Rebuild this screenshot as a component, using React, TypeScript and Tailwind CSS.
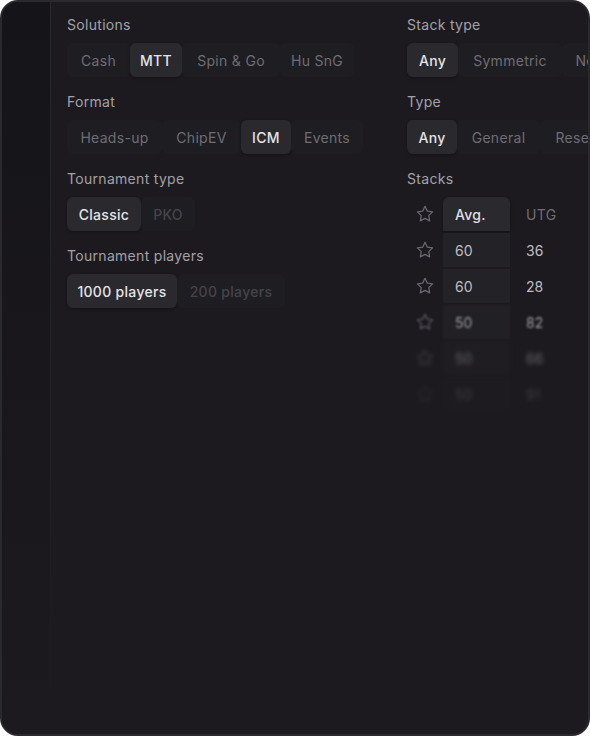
import React from "react";

const font = { fontFamily: "Inter, 'Noto Sans', sans-serif" };

type Item = { t: string; w: string };

function Seg({ items, active, dim = [] as string[] }: { items: Item[]; active: string; dim?: string[] }) {
  return (
    <div className="flex items-stretch h-[34px] mt-[9px]">
      {items.map((it) => {
        const a = it.t === active;
        const d = dim.includes(it.t);
        return (
          <div
            key={it.t}
            className={
              "flex items-center justify-center shrink-0 text-[14px] tracking-[0.3px] whitespace-nowrap rounded-[6px] " +
              it.w +
              " " +
              (a
                ? "bg-[#2a292e] text-[#e4e3e7] font-medium shadow-[0_1px_3px_rgba(0,0,0,0.35)]"
                : d
                ? "bg-[#1e1d22] text-[#45444a] font-medium"
                : "bg-[#1e1d22] text-[#6f6d74]")
            }
          >
            {it.t}
          </div>
        );
      })}
    </div>
  );
}

function Label({ children }: { children: React.ReactNode }) {
  return <div className="text-[14px] tracking-[0.3px] text-[#a3a1a8] leading-[18px]">{children}</div>;
}

function Star() {
  return (
    <svg width="20" height="20" viewBox="0 0 24 24" fill="none" stroke="#6a6870" strokeWidth="1.5" strokeLinejoin="round">
      <path d="M12 2.8l2.8 5.8 6.3.9-4.6 4.4 1.1 6.3L12 17.2l-5.6 3 1.1-6.3L2.9 9.5l6.3-.9z" />
    </svg>
  );
}

export default function App() {
  const rows = [
    { a: "60", b: "36", cls: "" },
    { a: "60", b: "28", cls: "" },
    { a: "50", b: "82", cls: "opacity-80 blur-[1px]" },
    { a: "50", b: "66", cls: "opacity-45 blur-[2px]" },
    { a: "50", b: "91", cls: "opacity-20 blur-[2px]" },
  ];
  return (
    <div className="w-[590px] h-[736px] bg-white" style={font}>
      <div className="w-[590px] h-[736px] rounded-[18px] border-2 border-[#2a292e] bg-[#1c1a1f] overflow-hidden flex">
        <div className="w-[48px] shrink-0 h-full bg-gradient-to-b from-[#151418] via-[#19171c] to-[#1c1a1f]" />
        <div className="w-px shrink-0 h-full bg-gradient-to-b from-[#2a292e] via-[#222126] to-[#1c1a1f]" />
        <div className="flex-1 flex pt-[14px] pl-[16px] overflow-hidden">
          <div className="w-[340px] shrink-0 flex flex-col">
            <Label>Solutions</Label>
            <Seg
              items={[
                { t: "Cash", w: "w-[63px]" },
                { t: "MTT", w: "w-[52px]" },
                { t: "Spin & Go", w: "w-[98px]" },
                { t: "Hu SnG", w: "w-[74px]" },
              ]}
              active="MTT"
            />
            <div className="h-[16px]" />
            <Label>Format</Label>
            <Seg
              items={[
                { t: "Heads-up", w: "w-[95px]" },
                { t: "ChipEV", w: "w-[79px]" },
                { t: "ICM", w: "w-[50px]" },
                { t: "Events", w: "w-[72px]" },
              ]}
              active="ICM"
            />
            <div className="h-[16px]" />
            <Label>Tournament type</Label>
            <Seg
              items={[
                { t: "Classic", w: "w-[74px]" },
                { t: "PKO", w: "w-[54px]" },
              ]}
              active="Classic"
              dim={["PKO"]}
            />
            <div className="h-[16px]" />
            <Label>Tournament players</Label>
            <Seg
              items={[
                { t: "1000 players", w: "w-[110px]" },
                { t: "200 players", w: "w-[108px]" },
              ]}
              active="1000 players"
              dim={["200 players"]}
            />
          </div>
          <div className="flex flex-col shrink-0">
            <Label>Stack type</Label>
            <Seg
              items={[
                { t: "Any", w: "w-[51px]" },
                { t: "Symmetric", w: "w-[104px]" },
                { t: "Near", w: "w-[60px]" },
              ]}
              active="Any"
            />
            <div className="h-[16px]" />
            <Label>Type</Label>
            <Seg
              items={[
                { t: "Any", w: "w-[50px]" },
                { t: "General", w: "w-[83px]" },
                { t: "Research", w: "w-[95px]" },
              ]}
              active="Any"
            />
            <div className="h-[16px]" />
            <Label>Stacks</Label>
            <div className="mt-[9px] flex flex-col gap-[2px]">
              <div className="flex items-center h-[34px]">
                <div className="w-[36px] flex justify-center"><Star /></div>
                <div className="w-[67px] h-full flex items-center px-[12px] rounded-t-[6px] bg-[#2a292e] text-[#e0dfe3] font-medium text-[14px] tracking-[0.3px] shadow-[0_1px_3px_rgba(0,0,0,0.35)]">Avg.</div>
                <div className="pl-[16px] text-[14px] tracking-[0.3px] text-[#6f6d74]">UTG</div>
              </div>
              {rows.map((r, i) => (
                <div key={i} className={"flex items-center h-[34px] " + r.cls}>
                  <div className="w-[36px] flex justify-center"><Star /></div>
                  <div className="w-[67px] h-full flex items-center px-[12px] bg-[#232227] text-[#bebdc2] text-[14px]">{r.a}</div>
                  <div className="pl-[16px] text-[14px] text-[#bebdc2]">{r.b}</div>
                </div>
              ))}
            </div>
          </div>
        </div>
      </div>
    </div>
  );
}
